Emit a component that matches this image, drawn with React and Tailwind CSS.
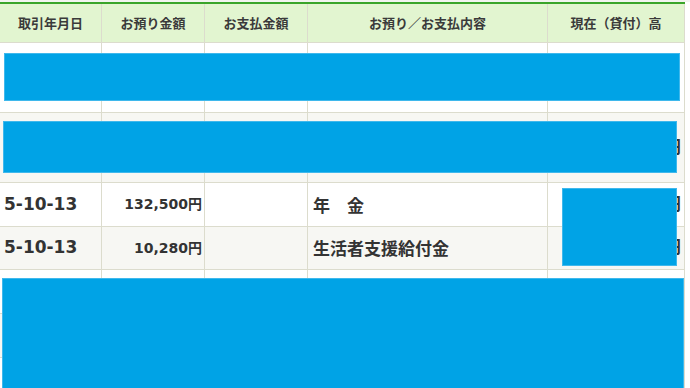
import React from "react";

const font = { fontFamily: '"DejaVu Sans", "Noto Sans CJK JP", sans-serif' };
const jp = { fontFamily: '"Noto Sans CJK JP", sans-serif' };

const cols = "grid grid-cols-[102px_103px_103px_240px_137px]";
const cell = "border-r border-b border-[#dcdccd] flex items-center";

const headers = ["取引年月日", "お預り金額", "お支払金額", "お預り／お支払内容", "現在（貸付）高"];

const rows = [
  { h: "h-[70px]", bg: "bg-white", date: "", dep: "", desc: "", bal: "" },
  { h: "h-[70px]", bg: "bg-[#f7f7f3]", date: "", dep: "", desc: "", bal: "000円" },
  { h: "h-[44px]", bg: "bg-white", date: "5-10-13", dep: "132,500円", desc: "年　金", bal: "000円" },
  { h: "h-[43px]", bg: "bg-[#f7f7f3]", date: "5-10-13", dep: "10,280円", desc: "生活者支援給付金", bal: "000円" },
  { h: "h-[44px]", bg: "bg-white", date: "", dep: "", desc: "", bal: "" },
  { h: "h-[44px]", bg: "bg-[#f7f7f3]", date: "", dep: "", desc: "", bal: "" },
  { h: "h-[44px]", bg: "bg-white", date: "", dep: "", desc: "", bal: "" },
];

function Mask({ className }) {
  return <div className={`absolute bg-[#00a3e6] border border-[#3fb8ec] ${className}`} />;
}

export default function App() {
  return (
    <div className="relative w-[690px] h-[388px] overflow-hidden bg-white text-[#333]" style={font}>
      <div className="h-[2px] bg-[#f2f4f0]" />
      <div className="w-[685px] border-t-2 border-[#3aa52a]">
        <div className={`${cols} h-[39px] bg-[#e2f5d0]`}>
          {headers.map((t) => (
            <div key={t} className={`${cell} justify-center text-[13px] font-bold text-[#3a3a3a]`} style={jp}>
              {t}
            </div>
          ))}
        </div>
        {rows.map((r, i) => (
          <div key={i} className={`${cols} ${r.h} ${r.bg}`}>
            <div className={`${cell} pl-[4px] text-[17px] font-bold`}>{r.date}</div>
            <div className={`${cell} justify-end pr-[2px] text-[14px] font-bold`}>{r.dep}</div>
            <div className={cell} />
            <div className={`${cell} pl-[5px] text-[17px] font-bold`} style={jp}>{r.desc}</div>
            <div className={`${cell} justify-end pr-[3px] text-[17px] font-bold`}>{r.bal}</div>
          </div>
        ))}
      </div>

      <Mask className="left-[4px] top-[53px] w-[676px] h-[48px]" />
      <Mask className="left-[3px] top-[121px] w-[674px] h-[52px]" />
      <Mask className="left-[562px] top-[188px] w-[115px] h-[78px]" />
      <Mask className="left-[2px] top-[278px] w-[682px] h-[120px]" />
    </div>
  );
}
